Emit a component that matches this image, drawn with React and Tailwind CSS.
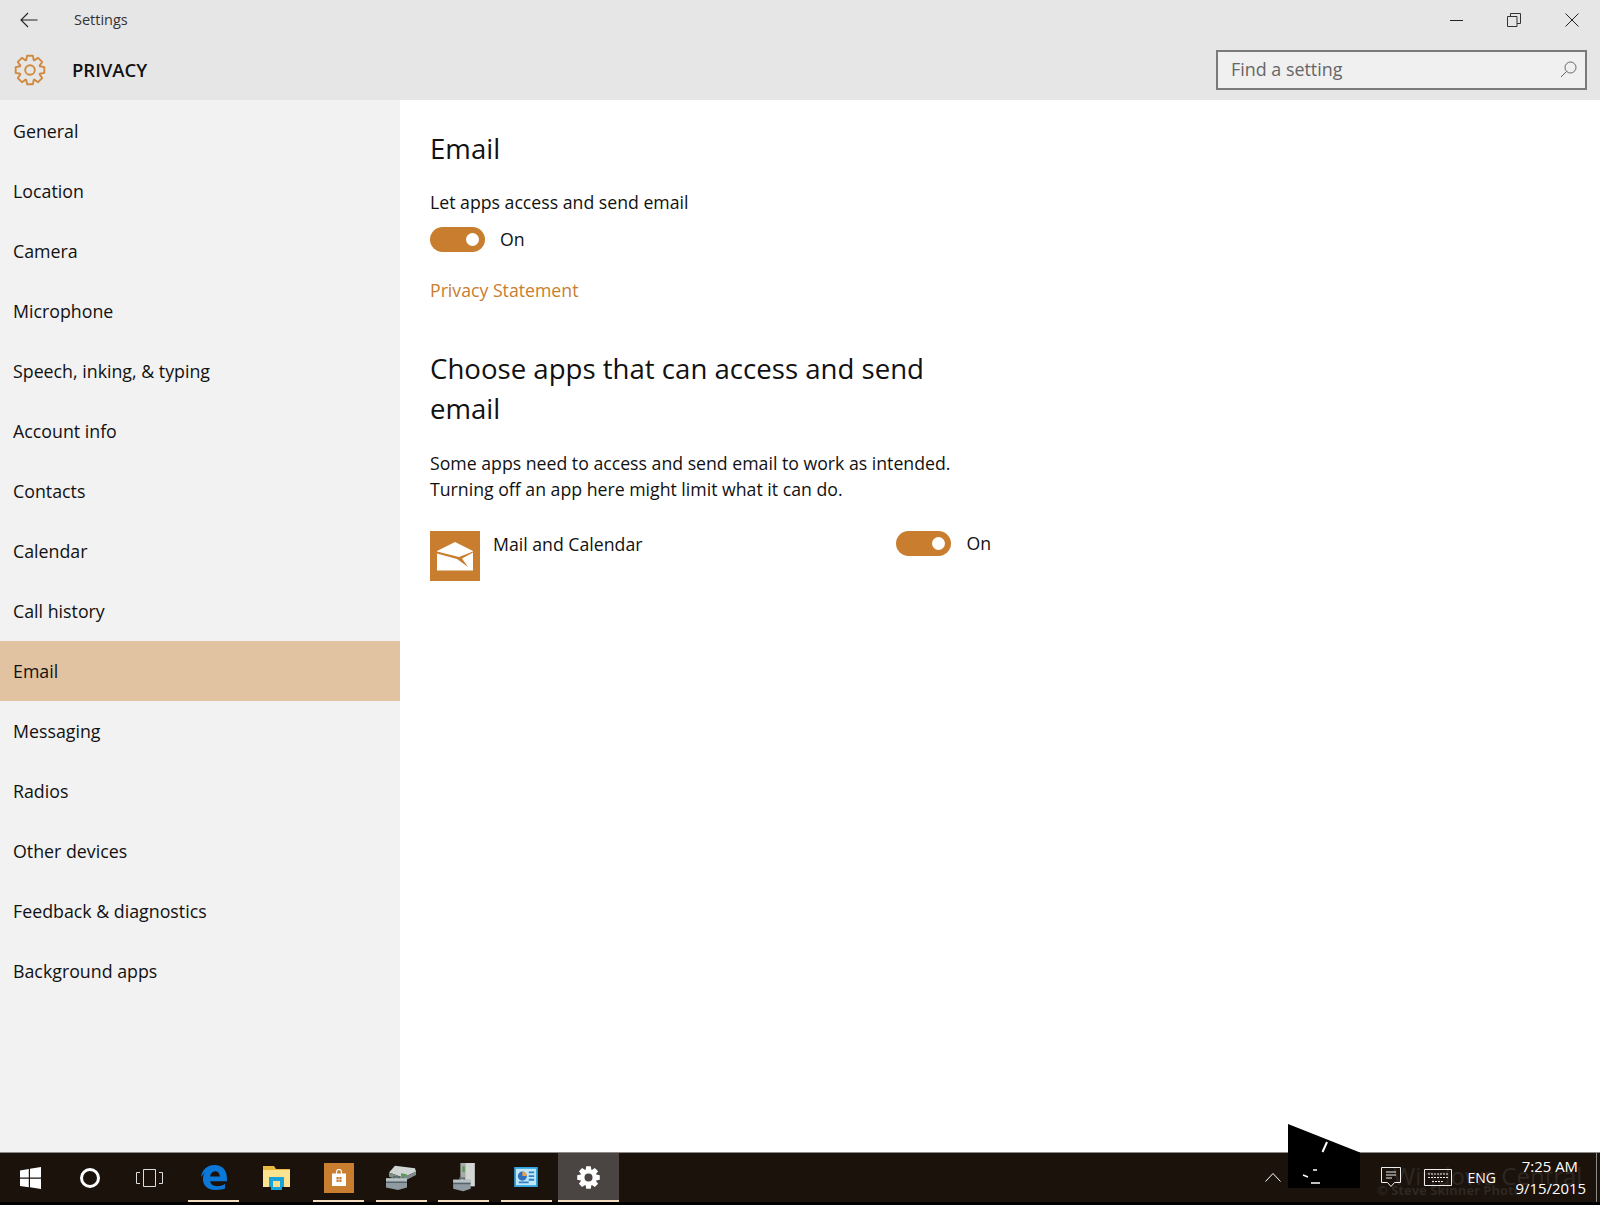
import React from "react";

const navItems = [
  "General",
  "Location",
  "Camera",
  "Microphone",
  "Speech, inking, & typing",
  "Account info",
  "Contacts",
  "Calendar",
  "Call history",
  "Email",
  "Messaging",
  "Radios",
  "Other devices",
  "Feedback & diagnostics",
  "Background apps",
];

// 8 toothed gear outline, used by the header icon and the taskbar one
const gearPath = (c, outer, inner) => {
  let d = "";
  for (let i = 0; i < 8; i++) {
    const a = (i * Math.PI) / 4 - Math.PI / 2;
    const pts = [
      [inner, a - 0.36],
      [outer, a - 0.2],
      [outer, a + 0.2],
      [inner, a + 0.36],
    ];
    pts.forEach(([r, t], j) => {
      const x = (c + r * Math.cos(t)).toFixed(2);
      const y = (c + r * Math.sin(t)).toFixed(2);
      d += `${i === 0 && j === 0 ? "M" : "L"}${x} ${y} `;
    });
  }
  return d + "Z";
};

const Toggle = () => (
  <div className="flex h-[25px] w-[55px] items-center justify-end rounded-full bg-[#c97d2e] pr-[6px]">
    <div className="h-[13px] w-[13px] rounded-full bg-white" />
  </div>
);

const TaskItem = ({ active, last, children }) => (
  <div className={`flex h-full items-center ${last ? "w-[57.5px]" : "w-[62.5px]"}`}>
    <div className="relative flex h-full w-[51px] items-center justify-center">
      {children}
      {active && <div className="absolute bottom-0 left-0 right-0 h-[2px] bg-[#f3dcc0]" />}
    </div>
  </div>
);

const Toolbox = () => (
  <>
    <path fill="#8f9ba0" d="M0 16h21v11l-9 3-12-3z" />
    <path fill="#55636a" d="M0 20h21v1.500H0zM7 13.500h7v1.500H7zM7 13.500h1.500v4H7zM12.500 13.500H14v4h-1.500z" />
    <path fill="#b9c3c6" d="M0 16h21v3H0z" />
  </>
);

const App = () => {
  return (
    <div className="relative flex h-[1205px] w-[1600px] flex-col overflow-hidden bg-white font-['Open_Sans',sans-serif] text-[#111]">
      {/* header */}
      <div className="h-[100px] shrink-0 bg-[#e6e6e6]">
        <div className="flex h-[40px] items-center">
          <div className="flex w-[74px] justify-center pr-[16px]">
            <svg width="18" height="16" viewBox="0 0 18 16" fill="none" stroke="#222" strokeWidth="1.1">
              <path d="M17.5 8H1M8 1 1 8l7 7" />
            </svg>
          </div>
          <span className="text-[14.5px] text-[#333]">Settings</span>
          <div className="ml-auto flex items-center">
            <div className="flex w-[57px] justify-center">
              <div className="h-[1px] w-[13px] bg-[#222]" />
            </div>
            <div className="flex w-[58px] justify-center">
              <svg width="14" height="14" viewBox="0 0 14 14" fill="none" stroke="#333" strokeWidth="1">
                <path d="M.5 3.5H10v10H.5zM3.5 3.5V.5h10v10H10" />
              </svg>
            </div>
            <div className="flex w-[57px] justify-center">
              <svg width="14" height="14" viewBox="0 0 14 14" fill="none" stroke="#222" strokeWidth="1">
                <path d="m.5.5 13 13M13.5.5l-13 13" />
              </svg>
            </div>
          </div>
        </div>
        <div className="flex h-[60px] items-center">
          <div className="mb-[1px] flex w-[72px] justify-center pr-[13px]">
            <svg width="32" height="32" viewBox="0 0 32 32" fill="none" stroke="#d08a3f" strokeWidth="1.9" strokeLinejoin="round">
              <path d={gearPath(16, 14.6, 10.6)} />
              <circle cx="16" cy="16" r="4.8" />
            </svg>
          </div>
          <span className="text-[18.5px] font-semibold text-[#111]">PRIVACY</span>
          <div className="ml-auto mr-[13px] mb-[1px] flex h-[40px] w-[371px] items-center justify-between border-[2.5px] border-[#7a7a7a] bg-[#f0f0f0] pl-[13px] pr-[8px]">
            <span className="text-[17.9px] text-[#666]">Find a setting</span>
            <svg width="17" height="17" viewBox="0 0 17 17" fill="none" stroke="#666" strokeWidth="1">
              <circle cx="10.5" cy="6.5" r="5.5" />
              <path d="M6.5 10.5 1 16" />
            </svg>
          </div>
        </div>
      </div>

      {/* body */}
      <div className="flex min-h-0 flex-1">
        <aside className="w-[400px] shrink-0 bg-[#f2f2f2] pt-[1px]">
          {navItems.map((item) => (
            <div
              key={item}
              className={`flex h-[60px] items-center pl-[13px] text-[17.8px] ${item === "Email" ? "bg-[#e2c3a1]" : ""}`}
            >
              {item}
            </div>
          ))}
        </aside>
        <main className="flex-1 pl-[30px]">
          <h1 className="mt-[26px] text-[27.6px] leading-[44px]">Email</h1>
          <p className="mt-[19px] text-[17.7px] leading-[26px]">Let apps access and send email</p>
          <div className="mt-[12px] flex items-center gap-[15px]">
            <Toggle />
            <span className="text-[17.7px] leading-[25px]">On</span>
          </div>
          <p className="mt-[25px] text-[17.7px] leading-[26px] text-[#c97d2e]">Privacy Statement</p>
          <h2 className="mt-[45px] w-[530px] text-[27.6px] leading-[40px]">
            Choose apps that can access and send email
          </h2>
          <p className="mt-[23px] w-[540px] text-[17.7px] leading-[25.5px]">
            Some apps need to access and send email to work as intended. Turning off an app here might limit what it can do.
          </p>
          <div className="mt-[29px] flex w-[561px] items-start">
            <svg width="50" height="50" viewBox="0 0 50 50" className="shrink-0">
              <path fill="#c97d2e" d="M0 0h50v50H0z" />
              <path fill="#fff" d="M25 11 43 20v19.500H7V20z" />
              <path fill="#c97d2e" d="M7 20.5 29 26l14-5.5v1l-11 6 6 8.5-11-8L7 22.500z" />
            </svg>
            <span className="ml-[13px] text-[17.7px] leading-[26px]">Mail and Calendar</span>
            <div className="ml-auto flex items-center gap-[15px]">
              <Toggle />
              <span className="text-[17.7px] leading-[25px]">On</span>
            </div>
          </div>
        </main>
      </div>

      {/* taskbar */}
      <div className="relative flex h-[53px] shrink-0 items-center border-t border-[#8c8a88] bg-[#1b120c] pb-[3px] text-white">
        <span className="absolute left-[1393px] top-[8px] text-[24px] leading-[30px] text-[#2e2722]">Windows Central</span>
        <span className="absolute left-[1377px] top-[28px] text-[13px] font-bold text-[#2e2722]">© Steve Skinner Photo</span>
        <div className="relative flex h-full items-center">
          <div className="flex w-[60px] justify-center">
            <svg width="21" height="22" viewBox="0 0 21 22" fill="#fff">
              <path d="M0 3.5 8.800 2v8.500H0zM10 1.800 21 0v10.500H10zM0 11.700h8.800v8.600L0 19zM10 11.700h11V22l-11-1.700z" />
            </svg>
          </div>
          <div className="flex w-[59px] justify-center">
            <div className="h-[20px] w-[20px] rounded-full border-[3px] border-white" />
          </div>
          <div className="flex w-[60px] justify-center">
            <svg width="27" height="18" viewBox="0 0 27 18" fill="none" stroke="#ddd" strokeWidth="1">
              <path d="M7.500.5h12v17h-12zM4 3.500H.5v11H4M23 3.500h3.500v11H23" />
            </svg>
          </div>
          <div className="h-full w-[9px]" />
          <TaskItem active>
            <svg width="26" height="25" viewBox="0 0 27 26">
              <path fill="#0b78d7" d="M14 0C22.500 0 27 5.500 27 14.500V17H9.500c.6 3.500 3.500 5 7 5 3.200 0 6-.8 8.500-2.300v4.800C22 25.500 19 26 15.500 26 6.500 26 2 20.800 2 14.500c0-2.500.7-5 2-7C3 9 1.500 10.500 0 12.500 1 5 6.500 0 14 0zM9.500 12h10c0-3.300-1.800-5.500-4.800-5.500S10 8.700 9.500 12z" />
            </svg>
          </TaskItem>
          <TaskItem>
            <svg width="27" height="24" viewBox="0 0 27 24">
              <path fill="#e8b93c" d="M0 0h11l2 3h14v4H0z" />
              <path fill="#fbe38f" d="M0 4h27v17H0z" />
              <path fill="#19a3dc" d="M6 11h15v10h-2v3H8v-3H6z" />
              <path fill="#f6e08c" d="M10 15h7v6h-7z" />
            </svg>
          </TaskItem>
          <TaskItem active>
            <div className="flex h-[30px] w-[30px] items-center justify-center bg-[#c97d2e]">
              <svg width="14" height="17" viewBox="0 0 14 17">
                <path fill="none" stroke="#fff" strokeWidth="1.2" d="M4.500 5V3a2.500 2.500 0 0 1 5 0v2" />
                <path fill="#fff" d="M0 4.500h14V17H0z" />
                <path fill="#c97d2e" d="M4.500 8h2.200v2.200H4.500zM7.300 8h2.200v2.200H7.300zM4.500 10.800h2.200V13H4.500zM7.300 10.800h2.200V13H7.300z" />
              </svg>
            </div>
          </TaskItem>
          <TaskItem active>
            <svg width="30" height="25" viewBox="0 -5 30 30" className="mb-[1px]" preserveAspectRatio="none">
              <path fill="#cfd5d3" d="M9 -4 29 -1l1 4-13 7-14-6z" />
              <path fill="#808c86" d="m3 4 14 6v5L3 9z" />
              <path fill="#5c9a5c" d="m15 5 6 1-1 4-5-1z" />
              <path fill="#7f8b8e" d="m17 10 13-7v4l-13 8z" />
              <g transform="translate(0 -5)">
                <Toolbox />
              </g>
            </svg>
          </TaskItem>
          <TaskItem active>
            <svg width="26" height="30" viewBox="0 0 26 36">
              <path fill="#d3d6d3" d="M9 0h17v28H9z" />
              <path fill="#a8adab" d="M9 0h6v26H9z" />
              <path fill="#5c9a5c" d="M11 4h3v7h-3z" />
              <g transform="translate(0 4)">
                <Toolbox />
              </g>
            </svg>
          </TaskItem>
          <TaskItem active last>
            <svg width="26" height="20" viewBox="0 0 26 22" className="mb-[1px]">
              <path fill="#2fa4e0" d="M0 0h26v22H0z" />
              <path fill="#bfe7f8" d="M2 2h22v18H2z" />
              <circle cx="9" cy="10" r="5" fill="#2f6fc0" />
              <path fill="#f0a040" d="M9 10V5a5 5 0 0 1 5 5z" />
              <path fill="#2f80c8" d="M16 5h6v2h-6zM16 9h6v2h-6zM16 13h6v2h-6zM5 16h11v2H5z" />
            </svg>
          </TaskItem>
          <div className="relative flex h-full w-[61px] items-center justify-center bg-[#4a4542]">
            <svg width="23" height="23" viewBox="0 0 24 24">
              <path fill="#fff" fillRule="evenodd" d={`${gearPath(12, 12, 8.600)} M12 7.800a4.200 4.200 0 1 0 0 8.400a4.200 4.200 0 1 0 0-8.400z`} />
            </svg>
            <div className="absolute bottom-0 left-0 right-0 h-[2px] bg-[#f3dcc0]" />
          </div>
        </div>

        {/* tray */}
        <div className="relative ml-auto flex h-full items-center">
          <svg width="16" height="9" viewBox="0 0 16 9" fill="none" stroke="#fff" strokeWidth="1" className="mr-[100px]">
            <path d="m.5 8.500 7.500-8 7.500 8" />
          </svg>
          <svg width="20" height="21" viewBox="0 0 20 21" fill="none" stroke="#eee" strokeWidth="1" className="mr-[23px]">
            <path d="M.5.500h19v15h-6l-3.500 4-3.500-4h-6zM5 5h10M5 8h10M5 11h6" />
          </svg>
          <svg width="28" height="17" viewBox="0 0 28 17" fill="none" stroke="#eee" strokeWidth="1" className="mr-[16px]">
            <path d="M.500.500h27v16H.500z" />
            <path d="M4 5h20M4 8.500h20M8 12.500h12" strokeDasharray="2 1" />
          </svg>
          <span className="mr-[18px] text-[14px]">ENG</span>
          <div className="mb-[1px] mr-[10px] flex w-[72px] flex-col items-end text-[14.9px] leading-[22px]">
            <span className="pr-[8px]">7:25 AM</span>
            <span className="whitespace-nowrap">9/15/2015</span>
          </div>
          <div className="mr-[3px] h-full w-[1px] bg-[#8c8a88]" />
        </div>
        <div className="absolute bottom-0 left-0 right-0 h-[3px] bg-black" />
      </div>

      {/* black shape lying over the taskbar */}
      <svg width="73" height="65" viewBox="0 0 73 65" className="absolute left-[1288px] top-[1124px]">
        <path d="M0 0 72 28.500V64H0z" fill="#000" />
        <path d="m39 18-4.500 10" stroke="#fff" strokeWidth="2" />
        <path d="M15 51l5 2M29 46l-4 0M23 59h9" stroke="#fff" strokeWidth="1.500" />
      </svg>
    </div>
  );
};

export default App;
